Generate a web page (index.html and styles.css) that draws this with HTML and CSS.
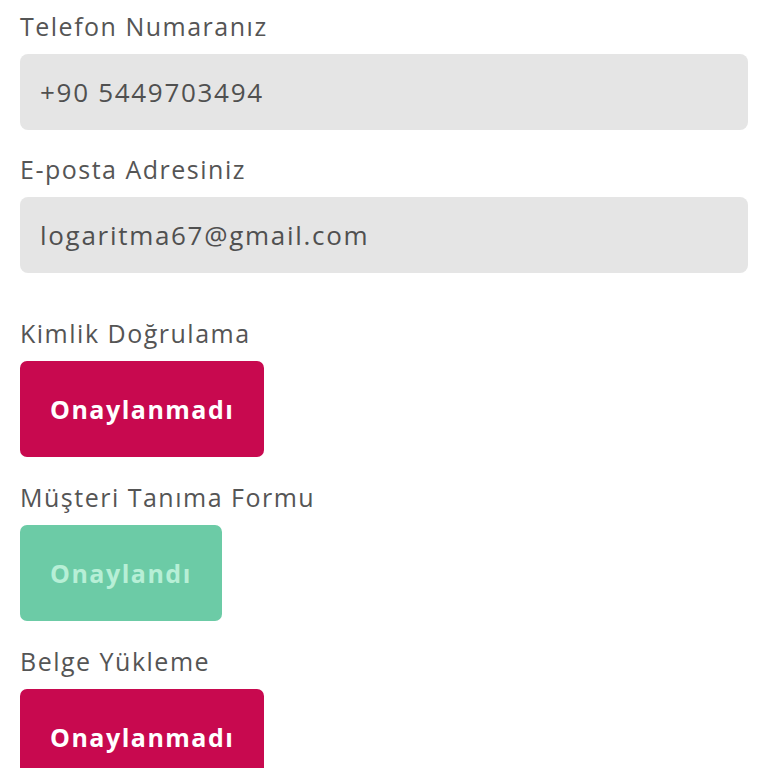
FILE: index.html
```html
<!DOCTYPE html>
<html lang="tr">
<head>
<meta charset="utf-8">
<link rel="stylesheet" href="styles.css">
</head>
<body>
<main class="form">
  <section class="field">
    <div class="label">Telefon Numaranız</div>
    <div class="input">+90 5449703494</div>
  </section>
  <section class="field">
    <div class="label">E-posta Adresiniz</div>
    <div class="input">logaritma67@gmail.com</div>
  </section>
  <section class="field status first-status">
    <div class="label">Kimlik Doğrulama</div>
    <div><span class="btn btn-red">Onaylanmadı</span></div>
  </section>
  <section class="field status">
    <div class="label">Müşteri Tanıma Formu</div>
    <div><span class="btn btn-green">Onaylandı</span></div>
  </section>
  <section class="field status">
    <div class="label">Belge Yükleme</div>
    <div><span class="btn btn-red">Onaylanmadı</span></div>
  </section>
</main>
</body>
</html>
```
FILE: styles.css
```css
html, body {
  margin: 0;
  padding: 0;
  background: #ffffff;
}
body {
  font-family: "Open Sans", "Noto Sans", sans-serif;
  color: #555555;
  overflow: hidden;
}
.form {
  padding: 11px 20px 0 20px;
  display: flex;
  flex-direction: column;
}
.field {
  display: flex;
  flex-direction: column;
  margin-top: 24px;
}
.field:first-child {
  margin-top: 0;
}
.status {
  margin-top: 25px;
}
.first-status {
  margin-top: 45px;
}
.label {
  font-size: 25px;
  line-height: 30px;
  margin-bottom: 13px;
  letter-spacing: 1.5px;
}
.input {
  background: #e5e5e5;
  border-radius: 8px;
  height: 76px;
  display: flex;
  align-items: center;
  padding: 0 20px;
  font-size: 26px;
  letter-spacing: 1.7px;
  color: #505050;
}
.btn {
  display: inline-flex;
  align-items: center;
  justify-content: center;
  height: 96px;
  padding: 0 30px;
  border-radius: 7px;
  font-size: 25px;
  font-weight: 700;
  letter-spacing: 1.5px;
  box-sizing: border-box;
}
.btn-red {
  background: #c8094f;
  color: #ffffff;
}
.btn-green {
  background: #6ccba6;
  color: #b7efd6;
}
```
